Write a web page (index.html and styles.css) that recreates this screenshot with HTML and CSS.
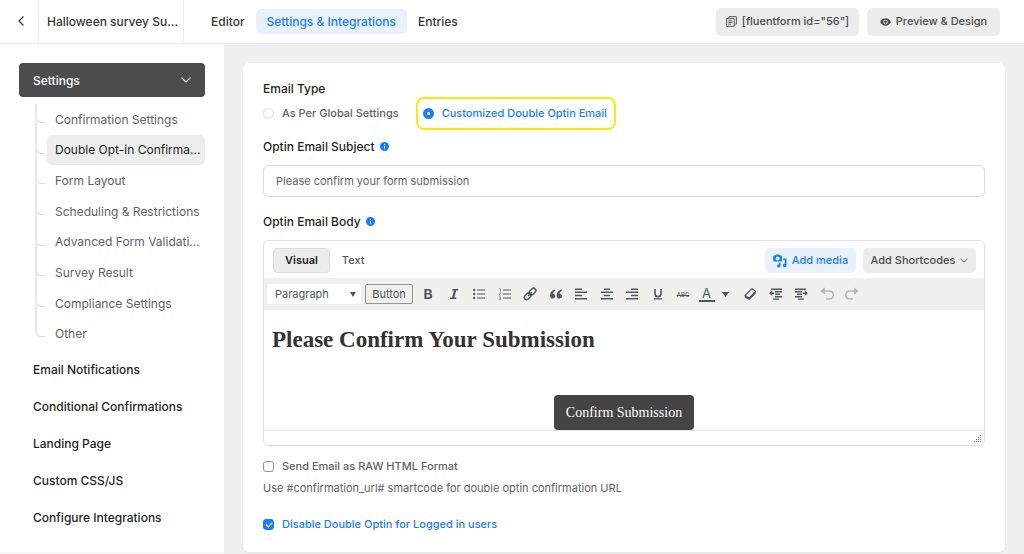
FILE: index.html
```html
<!DOCTYPE html>
<html lang="en">
<head>
    <meta charset="UTF-8">
    <title>Halloween survey - Settings &amp; Integrations</title>
    <link rel="stylesheet" href="styles.css">
</head>
<body>
    <header class="topbar">
        <button class="back" aria-label="Back">
            <svg width="8" height="10" viewBox="0 0 8 10"><path d="M6.500.5 2 5l4.500 4.500" fill="none" stroke="currentColor" stroke-width="1.200"/></svg>
        </button>
        <div class="form-name">Halloween survey Su...</div>
        <nav class="tabs">
            <a href="#">Editor</a>
            <a href="#" class="active">Settings &amp; Integrations</a>
            <a href="#">Entries</a>
        </nav>
        <div class="topbar-actions">
            <button class="btn btn-code">
                <svg width="11" height="11" viewBox="0 0 11 11" fill="none" stroke="currentColor" stroke-width="0.9"><path d="M3 2.500V.6h7.400v7.600H8.600M.6 2.600h7.600v7.800H.6zM2.400 4.800h4M2.400 6.500h4M2.400 8.200h2.600"/></svg>
                [fluentform id="56"]
            </button>
            <button class="btn btn-preview">
                <svg width="11" height="8" viewBox="0 0 11 8"><path d="M5.500.3C3 .3 1.100 2 .2 4c.9 2 2.800 3.700 5.300 3.700S9.900 6 10.800 4C9.900 2 8 .3 5.500.3z" fill="currentColor"/><circle cx="5.500" cy="4" r="1.900" fill="none" stroke="#ececec" stroke-width=".9"/></svg>
                Preview &amp; Design
            </button>
        </div>
    </header>

    <div class="layout">
        <aside class="sidebar">
            <button class="menu-head">
                Settings
                <svg width="10" height="6" viewBox="0 0 10 6"><path d="M.5.6 5 5 9.500.6" fill="none" stroke="currentColor" stroke-width="1.100"/></svg>
            </button>
            <ul class="submenu">
                <li><a href="#">Confirmation Settings</a></li>
                <li><a href="#" class="active">Double Opt-in Confirma...</a></li>
                <li><a href="#">Form Layout</a></li>
                <li><a href="#">Scheduling &amp; Restrictions</a></li>
                <li><a href="#">Advanced Form Validati...</a></li>
                <li><a href="#">Survey Result</a></li>
                <li><a href="#">Compliance Settings</a></li>
                <li><a href="#">Other</a></li>
            </ul>
            <ul class="menu">
                <li><a href="#">Email Notifications</a></li>
                <li><a href="#">Conditional Confirmations</a></li>
                <li><a href="#">Landing Page</a></li>
                <li><a href="#">Custom CSS/JS</a></li>
                <li><a href="#">Configure Integrations</a></li>
            </ul>
        </aside>

        <main class="content">
            <form class="card">
                <div class="label" id="typeLabel">Email Type</div>
                <div class="radio-row" role="radiogroup" aria-labelledby="typeLabel">
                    <label class="choice"><input type="radio" name="type">As Per Global Settings</label>
                    <label class="choice highlight"><input type="radio" name="type" checked>Customized Double Optin Email</label>
                </div>

                <label class="label subject-label" for="subject">
                    Optin Email Subject
                    <svg class="info" width="9" height="9" viewBox="0 0 9 9"><circle cx="4.500" cy="4.500" r="4.500" fill="#1a7efb"/><path d="M4.500 4v2.600M4.500 2.200v1" stroke="#fff"/></svg>
                </label>
                <input type="text" id="subject" class="text-input" value="Please confirm your form submission">

                <div class="label body-label">
                    Optin Email Body
                    <svg class="info" width="9" height="9" viewBox="0 0 9 9"><circle cx="4.500" cy="4.500" r="4.500" fill="#1a7efb"/><path d="M4.500 4v2.600M4.500 2.200v1" stroke="#fff"/></svg>
                </div>
                <div class="editor">
                    <div class="editor-head">
                        <button type="button" class="mode active">Visual</button>
                        <button type="button" class="mode">Text</button>
                        <button type="button" class="btn add-media">
                            <svg width="14" height="14" viewBox="0 0 14 14" fill="currentColor"><path fill-rule="evenodd" d="M1 1.600h1.300L3 .4h3.200l.7 1.200h1.300q.8 0 .8.8v4.400q0 .8-.8.8H1q-.8 0-.8-.8V2.400q0-.8.8-.8zM4.600 2.600a2 2 0 1 0 0 4 2 2 0 0 0 0-4z"/><path d="M10.200 4.400h3.300v7a1.800 1.800 0 1 1-1.500-1.800V6.300h-1.800z"/><path d="M6 8.600h1.500v3.200a1.700 1.700 0 1 1-1.500-1.600z"/></svg>
                            Add media
                        </button>
                        <button type="button" class="btn shortcodes">
                            Add Shortcodes
                            <svg width="8" height="5" viewBox="0 0 8 5"><path d="M.4.500 4 4.200 7.600.5" fill="none" stroke="currentColor" stroke-width=".9"/></svg>
                        </button>
                    </div>
                    <div class="toolbar">
                        <div class="format">
                            <select aria-label="Format"><option>Paragraph</option></select>
                        </div>
                        <button type="button" class="tool-text">Button</button>
                        <div class="tools">
                            <button type="button" aria-label="Bold"><svg viewBox="0 0 14 14"><path fill-rule="evenodd" d="M3.400 2h4.200c2 0 3.200.9 3.200 2.600 0 1.100-.5 1.800-1.500 2.200 1.200.3 1.900 1.200 1.900 2.400C11.200 11 9.900 12 7.800 12H3.400zM5.500 3.700V6h1.700c.9 0 1.400-.4 1.400-1.200s-.5-1.100-1.400-1.100zM5.500 7.600v2.700h1.900c1 0 1.500-.5 1.500-1.400 0-.8-.6-1.300-1.500-1.300z"/></svg></button>
                            <button type="button" aria-label="Italic"><svg viewBox="0 0 14 14"><path d="M5.600 2h5.800l-.3 1.500H9.200L7.400 10.500h1.900L9 12H2.800l.3-1.500h2L6.900 3.500H5.300z"/></svg></button>
                            <button type="button" aria-label="Bulleted list"><svg viewBox="0 0 14 14"><path d="M5 2.500h8v1H5zM5 6.500h8v1H5zM5 10.500h8v1H5z"/><circle cx="2.200" cy="3" r="1.200"/><circle cx="2.200" cy="7" r="1.200"/><circle cx="2.200" cy="11" r="1.200"/></svg></button>
                            <button type="button" aria-label="Numbered list"><svg viewBox="0 0 14 14"><path d="M5 2.500h8v1H5zM5 6.500h8v1H5zM5 10.500h8v1H5z"/><path d="M1.500 1.800h.9v2.700M1.200 5.900h1.500L1.300 8h1.500M1.200 9.800h1.500v2.500H1.200M1.500 11h1" fill="none" stroke="currentColor" stroke-width=".6"/></svg></button>
                            <button type="button" aria-label="Link"><svg viewBox="0 0 14 14"><g fill="none" stroke="currentColor" stroke-width="1.500" transform="rotate(-45 7 7)"><rect x="-.2" y="4.700" width="7.800" height="4.600" rx="2.300"/><rect x="6.400" y="4.700" width="7.800" height="4.600" rx="2.300"/><path d="M4.500 7h5"/></g></svg></button>
                            <button type="button" aria-label="Blockquote"><svg viewBox="0 0 14 14"><path d="M6 2.600C3 3.200 1 5.200 1 8.400c0 2 1 3.200 2.700 3.200 1.500 0 2.600-1 2.600-2.500S5.200 6.700 3.900 6.700c.1-1.300 1-2.200 2.300-2.700zM12.700 2.600c-3 .6-5 2.600-5 5.800 0 2 1 3.200 2.700 3.200 1.500 0 2.600-1 2.600-2.500s-1.100-2.400-2.400-2.400c.1-1.300 1-2.200 2.300-2.700z"/></svg></button>
                            <button type="button" aria-label="Align left"><svg viewBox="0 0 14 14"><path d="M1 1.400h7v1.500H1zM1 4.600h12v1.500H1zM1 7.800h7v1.500H1zM1 11h12v1.500H1z"/></svg></button>
                            <button type="button" aria-label="Align center"><svg viewBox="0 0 14 14"><path d="M4 1.400h6v1.500H4zM1 4.600h12v1.500H1zM4 7.800h6v1.500H4zM1 11h12v1.500H1z"/></svg></button>
                            <button type="button" aria-label="Align right"><svg viewBox="0 0 14 14"><path d="M6 1.400h7v1.500H6zM1 4.600h12v1.500H1zM6 7.800h7v1.500H6zM1 11h12v1.500H1z"/></svg></button>
                            <button type="button" aria-label="Underline"><svg viewBox="0 0 14 14"><path d="M4 2v4.800c0 1.700 1.100 2.800 3 2.800s3-1.100 3-2.800V2" fill="none" stroke="currentColor" stroke-width="1.600"/><path d="M3 11.200h8v1.300H3z"/></svg></button>
                            <button type="button" aria-label="Strikethrough" class="strike">ABC</button>
                            <button type="button" aria-label="Text color" class="color"><span>A</span><svg class="caret" viewBox="0 0 7 5"><path d="M0 0h7L3.500 5z"/></svg></button>
                            <button type="button" aria-label="Clear formatting"><svg viewBox="0 0 14 14"><path d="M8.800 1.600 12.400 4.300 6.200 11.200 2 8.600z" fill="none" stroke="currentColor" stroke-width="1.200" stroke-linejoin="round"/><path d="M1.600 8.200 6.200 11l6.600-7v2.200L6.600 13 2 11z"/></svg></button>
                            <button type="button" aria-label="Outdent"><svg viewBox="0 0 14 14"><path d="M2 1.500h11v1.500H2zM6 4h7v1.500H6zM6 6.500h5V8H6zM6 9h7v1.500H6zM4 11.500h6v1.300H4zM0 6.300l3.200-2.800v2H5.200v1.600h-2v2z"/></svg></button>
                            <button type="button" aria-label="Indent"><svg viewBox="0 0 14 14"><path d="M1 1.500h11v1.500H1zM1 4h7v1.500H1zM3 6.500h5V8H3zM1 9h7v1.500H1zM4 11.500h6v1.300H4zM14 6.300l-3.200-2.800v2H8.800v1.600h2v2z"/></svg></button>
                            <button type="button" aria-label="Undo" disabled><svg viewBox="0 0 14 14"><path d="M3.500 4h5.700c2.500 0 4 1.500 4 3.900s-1.500 4-4 4H6" fill="none" stroke="currentColor" stroke-width="1.500"/><path d="M.3 4 4.800.6v6.800z"/></svg></button>
                            <button type="button" aria-label="Redo" disabled><svg viewBox="0 0 14 14"><path d="M10.500 4H4.800C2.300 4 .8 5.500.8 7.900s1.500 4 4 4H8" fill="none" stroke="currentColor" stroke-width="1.500"/><path d="M13.700 4 9.200.6v6.800z"/></svg></button>
                        </div>
                    </div>
                    <div class="editor-body">
                        <h1>Please Confirm Your Submission</h1>
                        <a href="#" class="confirm">Confirm Submission</a>
                    </div>
                    <div class="statusbar">
                        <svg width="8" height="8" viewBox="0 0 8 8"><path d="M6 0h1v1H6zM4 2h1v1H4zM6 2h1v1H6zM2 4h1v1H2zM4 4h1v1H4zM6 4h1v1H6zM0 6h1v1H0zM2 6h1v1H2zM4 6h1v1H4zM6 6h1v1H6z" fill="#777"/></svg>
                    </div>
                </div>

                <label class="choice raw"><input type="checkbox">Send Email as RAW HTML Format</label>
                <p class="help">Use #confirmation_url# smartcode for double optin confirmation URL</p>
                <label class="choice on"><input type="checkbox" checked>Disable Double Optin for Logged in users</label>
            </form>
        </main>
    </div>
</body>
</html>
```
FILE: styles.css
```css
* {
    margin: 0;
    padding: 0;
    box-sizing: border-box;
}

body {
    background: #f0f0f0;
    min-height: 100vh;
    display: flex;
    flex-direction: column;
    font-family: Inter, 'Liberation Sans', sans-serif;
    font-size: 12px;
    line-height: 17px;
    color: #1e1f21;
}

button,
input,
select {
    font: inherit;
    color: inherit;
    border: none;
    background: none;
}

button {
    cursor: pointer;
}

a {
    color: inherit;
    text-decoration: none;
}

ul {
    list-style: none;
}

svg {
    flex: none;
}

/* top bar */
.topbar {
    display: flex;
    align-items: center;
    height: 44px;
    background: #fff;
    border-bottom: 1px solid #ececec;
    font-weight: 500;
    color: #353537;
}

.back {
    width: 39px;
    height: 43px;
    padding-left: 4px;
    border-right: 1px solid #ececec;
}

.form-name {
    width: 145px;
    padding-left: 8px;
    line-height: 43px;
    border-right: 1px solid #ececec;
    white-space: nowrap;
}

.tabs {
    display: flex;
    margin-left: 16px;
}

.tabs a {
    padding: 4px 11px;
    border-radius: 5px;
}

.tabs .active {
    background: #e8f2ff;
    color: #1a7efb;
}

.topbar-actions {
    display: flex;
    gap: 8px;
    margin-left: auto;
    margin-right: 24px;
}

.btn {
    display: flex;
    align-items: center;
    justify-content: center;
    gap: 5px;
    height: 28px;
    border-radius: 5px;
    background: #ececec;
    color: #4b4c4d;
    font-size: 11px;
    font-weight: 500;
    white-space: nowrap;
}

.btn-code {
    width: 143px;
}

.btn-preview {
    width: 133px;
}

/* page */
.layout {
    display: flex;
    flex: 1;
    padding-bottom: 1px;
}

.sidebar {
    width: 224px;
    padding: 19px 19px 17px;
    background: #fff;
}

.menu-head {
    display: flex;
    align-items: center;
    justify-content: space-between;
    width: 100%;
    height: 34px;
    padding: 0 14px;
    border-radius: 4px;
    background: #4b4c4d;
    color: #fff;
    font-weight: 500;
}

.submenu {
    display: grid;
    height: 245px;
    margin: 7px 0 2px 16px;
    color: #606266;
}

.submenu li {
    position: relative;
    padding-left: 12px;
}

.submenu li::before,
.submenu li:not(:last-child)::after {
    content: '';
    position: absolute;
    left: 0;
    top: 0;
    border-left: 2px solid #e8e8e8;
}

.submenu li::before {
    width: 8px;
    height: 18px;
    border-bottom: 1px solid #dcdcdc;
    border-bottom-left-radius: 6px;
}

.submenu li:not(:last-child)::after {
    height: 100%;
}

.submenu a {
    display: flex;
    align-items: center;
    height: 100%;
    padding-left: 8px;
    border-radius: 5px;
    white-space: nowrap;
}

.submenu .active {
    background: #eceeed;
    color: #1e1f21;
}

.menu a {
    display: block;
    padding: 10px 14px;
    font-weight: 500;
}

.content {
    flex: 1;
    min-width: 0;
    padding: 19px 19px 0;
}

.card {
    padding: 17px 20px 19px;
    background: #fff;
    border-radius: 6px;
    box-shadow: 0 1px 2px #e2e2e2;
}

.label {
    display: flex;
    align-items: center;
    gap: 5px;
    font-weight: 500;
}

.subject-label {
    margin: 8px 0 10px;
}

.body-label {
    margin: 16px 0 10px;
}

.radio-row {
    display: flex;
    gap: 17px;
}

.choice {
    display: flex;
    align-items: center;
    gap: 8px;
    color: #606266;
    font-size: 11px;
    font-weight: 500;
}

.choice input {
    appearance: none;
    flex: none;
    width: 11px;
    height: 11px;
    border: 1px solid #dcdcdc;
    background: #fff;
}

.choice [type="radio"] {
    border-radius: 50%;
}

.choice [type="radio"]:checked {
    border: 4px solid #1a7efb;
}

.choice [type="checkbox"] {
    border-color: #949494;
    border-radius: 3px;
}

.choice [type="checkbox"]:checked {
    position: relative;
    border-color: #1a7efb;
    background: #1a7efb;
}

.choice [type="checkbox"]:checked::after {
    content: '';
    position: absolute;
    left: 3px;
    top: 1px;
    width: 3px;
    height: 5px;
    border: solid #fff;
    border-width: 0 1px 1px 0;
    transform: rotate(45deg);
}

.highlight {
    height: 33px;
    padding: 0 7px 0 5px;
    border: 2px solid #f5ea14;
    border-radius: 8px;
}

.highlight,
.on {
    color: #1a7efb;
}

.text-input {
    display: block;
    width: 100%;
    height: 32px;
    padding: 0 12px;
    border: 1px solid #dadbdd;
    border-radius: 6px;
    color: #606266;
    font-size: 11px;
}

/* editor */
.editor {
    border: 1px solid #e0e0e0;
    border-radius: 6px;
    overflow: hidden;
}

.editor-head {
    display: flex;
    align-items: center;
    height: 37px;
    padding: 2px 8px 0 9px;
}

.mode {
    height: 25px;
    padding: 0 12px;
    border-radius: 4px;
    color: #50575e;
    font-size: 11px;
    font-weight: 500;
}

.mode.active {
    padding: 0 11px;
    border: 1px solid #dcdcde;
    background: #ececec;
    color: #1e1f21;
    font-weight: 600;
}

.editor-head .btn {
    height: 25px;
}

.editor-head .add-media {
    width: 91px;
    margin-left: auto;
    margin-right: 7px;
    background: #e8f2ff;
    color: #1a7efb;
}

.shortcodes {
    width: 113px;
}

.toolbar {
    display: flex;
    align-items: center;
    height: 32px;
    padding-left: 3px;
    background: #f0f0ee;
    color: #50575e;
}

.format {
    position: relative;
    margin-right: 4px;
}

.format select {
    appearance: none;
    display: block;
    width: 94px;
    height: 20px;
    padding-left: 8px;
    border-radius: 3px;
    background: #fff;
    font-size: 11px;
}

.format::after {
    content: '';
    position: absolute;
    right: 5px;
    top: 8px;
    border: solid transparent;
    border-width: 5px 3px 0;
    border-top-color: #50575e;
}

.tool-text {
    width: 48px;
    height: 20px;
    margin-right: 5px;
    border: 1px solid #949494;
    border-radius: 2px;
    font-size: 11px;
    line-height: 18px;
}

.tools {
    display: flex;
    justify-content: space-between;
    width: 444px;
}

.tools button {
    display: flex;
    align-items: center;
    justify-content: center;
    width: 20px;
    height: 20px;
}

.tools svg {
    width: 14px;
    height: 14px;
    fill: currentColor;
}

.tools button:disabled {
    color: #b4b5b7;
}

.tools .strike {
    font-size: 6px;
    font-weight: 500;
    text-decoration: line-through;
}

.tools .color {
    width: 36px;
    justify-content: flex-start;
    gap: 7px;
}

.color span {
    width: 16px;
    border-bottom: 2px solid #50575e;
    font-size: 13px;
    line-height: 13px;
}

.tools .caret {
    width: 7px;
    height: 5px;
}

.editor-body {
    display: flex;
    flex-direction: column;
    align-items: center;
    padding: 16px 8px 0;
    font-family: Georgia, 'Liberation Serif', serif;
}

.editor-body h1 {
    align-self: stretch;
    margin-bottom: 41px;
    color: #333;
    font-size: 23px;
    line-height: 28px;
}

.confirm {
    padding: 0 12px;
    border-radius: 4px;
    background: #444;
    color: #fff;
    font-size: 14px;
    line-height: 35px;
}

.statusbar {
    display: flex;
    justify-content: flex-end;
    align-items: flex-end;
    height: 15px;
    padding: 2px;
    border-top: 1px solid #e0e0e0;
}

.raw {
    margin-top: 12px;
}

.help {
    margin: 5px 0 19px;
    color: #606266;
    font-size: 11px;
}
```
